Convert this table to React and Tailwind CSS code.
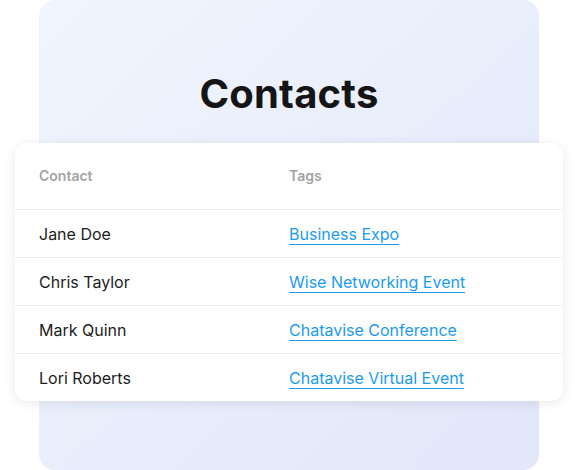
const contacts = [
    { name: "Jane Doe", tag: "Business Expo" },
    { name: "Chris Taylor", tag: "Wise Networking Event" },
    { name: "Mark Quinn", tag: "Chatavise Conference" },
    { name: "Lori Roberts", tag: "Chatavise Virtual Event" },
];

export default function App() {
    return (
        <div className="min-h-screen bg-white font-['Inter',sans-serif]">
            <div className="w-[500px] h-[470px] mx-auto rounded-2xl bg-gradient-to-br from-[#f1f5fe] to-[#e1e7f9] pt-[70px]">
                <h1 className="text-center text-[40px] leading-[48px] font-bold text-[#151515] tracking-[0.2px]">
                    Contacts
                </h1>

                {/* TABLE CARD */}
                <div className="-mx-6 mt-[25px] bg-white rounded-xl shadow-[0_2px_12px_rgba(0,0,0,0.09)]">
                    <div className="grid grid-cols-2 px-6 h-[66px] items-center text-sm font-semibold text-[#a3a3a3]">
                        <div>Contact</div>
                        <div>Tags</div>
                    </div>
                    {contacts.map((c) => (
                        <div
                            key={c.name}
                            className="grid grid-cols-2 px-6 h-12 items-center border-t border-[#ececec] text-base text-[#1c1c1c]"
                        >
                            <div>{c.name}</div>
                            <div>
                                <a
                                    href="#"
                                    className="text-[#1b9bf0] underline underline-offset-[4px] decoration-1"
                                >
                                    {c.tag}
                                </a>
                            </div>
                        </div>
                    ))}
                </div>
            </div>
        </div>
    );
}
